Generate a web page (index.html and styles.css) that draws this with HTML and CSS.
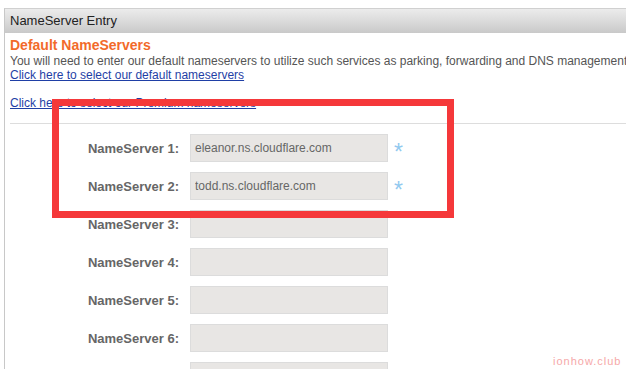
FILE: index.html
```html
<!DOCTYPE html>
<html lang="en">
<head>
    <meta charset="UTF-8">
    <title>NameServer Entry</title>
    <link rel="stylesheet" href="styles.css">
</head>
<body>
    <div class="panel">
        <div class="panel-header">NameServer Entry</div>
        <div class="panel-body">
            <h2>Default NameServers</h2>
            <p>You will need to enter our default nameservers to utilize such services as parking, forwarding and DNS management.</p>
            <p><a href="#">Click here to select our default nameservers</a></p>
            <p class="spacer"><a href="#">Click here to select our Premium nameservers</a></p>
            <hr>
            <div class="ns-form">
                <label>NameServer 1:</label>
                <input type="text" value="eleanor.ns.cloudflare.com">
                <span class="req">*</span>

                <label>NameServer 2:</label>
                <input type="text" value="todd.ns.cloudflare.com">
                <span class="req">*</span>

                <label>NameServer 3:</label>
                <input type="text">
                <span></span>

                <label>NameServer 4:</label>
                <input type="text">
                <span></span>

                <label>NameServer 5:</label>
                <input type="text">
                <span></span>

                <label>NameServer 6:</label>
                <input type="text">
                <span></span>

                <label></label>
                <input type="text">
                <span></span>
            </div>
        </div>
    </div>

    <!-- annotation box -->
    <div class="highlight"></div>
    <div class="watermark">ionhow.club</div>
</body>
</html>
```

FILE: styles.css
```css
* {
    margin: 0;
    padding: 0;
    box-sizing: border-box;
}

body {
    font-family: "Liberation Sans", Arial, sans-serif;
    background: #fff;
    color: #555;
    overflow: hidden;
    height: 369px;
    position: relative;
}

.panel {
    margin: 8px 0 0 4px;
    width: 800px;
    border-top: 1px solid #d0d0d0;
    border-left: 1px solid #c8c8c8;
    height: 400px;
}

.panel-header {
    height: 24px;
    line-height: 24px;
    padding-left: 5px;
    font-size: 13px;
    color: #222;
    background: linear-gradient(#ececec, #c9c9c9);
}

.panel-body {
    padding: 4px 0 0 5px;
}

h2 {
    font-size: 14px;
    line-height: 17px;
    color: #f26a2a;
    font-weight: bold;
}

p {
    font-size: 12px;
    line-height: 14px;
    color: #555;
    white-space: nowrap;
}

p.spacer {
    margin-top: 14px;
}

a {
    color: #1f3fa6;
    text-decoration: underline;
}

hr {
    border: none;
    border-top: 1px solid #ddd;
    margin: 13px 0 10px 0;
}

.ns-form {
    display: grid;
    grid-template-columns: 169px 198px 20px;
    grid-auto-rows: 28px;
    column-gap: 11px;
    row-gap: 10px;
    align-items: center;
}

.ns-form label {
    text-align: right;
    font-size: 13px;
    font-weight: bold;
    color: #666;
}

.ns-form input {
    height: 28px;
    width: 198px;
    background: #e8e6e4;
    border: 1px solid #dcdcdc;
    padding: 0 4px;
    font-family: "Liberation Sans", Arial, sans-serif;
    font-size: 12px;
    color: #666;
}

.req {
    height: 28px;
    padding-top: 8px;
    line-height: 20px;
    color: #92c9ef;
    font-size: 23px;
    margin-left: -5px;
}

.highlight {
    position: absolute;
    left: 52px;
    top: 99px;
    width: 402px;
    height: 119px;
    border: 7px solid #f5383a;
}

.watermark {
    position: absolute;
    left: 553px;
    top: 355px;
    font-size: 11px;
    letter-spacing: 1px;
    color: #f6a8a8;
}
```
